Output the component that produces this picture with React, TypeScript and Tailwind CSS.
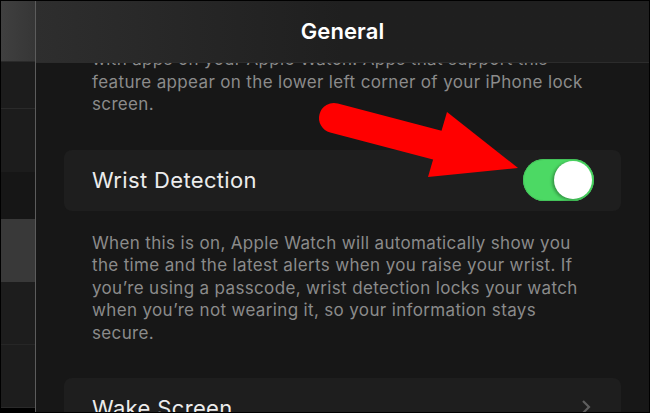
import React from "react";

const sideRows = [
  { h: "h-[47px]", bg: "bg-[#1c1c1c]", border: "border-b border-[#2a2a2a]" },
  { h: "h-[63px]", bg: "bg-[#1c1c1c]", border: "" },
  { h: "h-[47px]", bg: "bg-[#161616]", border: "" },
  { h: "h-[63px]", bg: "bg-[#393939]", border: "" },
  { h: "h-[63px]", bg: "bg-[#1d1d1d]", border: "border-b border-[#262626]" },
  { h: "h-[63px]", bg: "bg-[#1d1d1d]", border: "border-b border-[#2a2a2a]" },
];

const Toggle = () => (
  <div className="w-[71px] h-[42px] rounded-full bg-[#4cd964] flex items-center justify-end pr-[2px] shadow-[inset_0_0_0_1px_#44c45a]">
    <div className="w-[38px] h-[38px] rounded-full bg-white shadow-[-2px_1px_3px_rgba(0,0,0,0.3)]" />
  </div>
);

export default function App() {
  return (
    <div className="relative w-[650px] h-[413px] overflow-hidden bg-black p-px font-['Inter','Noto_Sans',sans-serif]">
      <div className="flex h-full">
        {/* sidebar */}
        <div className="w-[34px] flex flex-col">
          <div className="h-[61px] bg-gradient-to-r from-[#404040] to-[#363636] border-b border-[#2a2a2a]" />
          {sideRows.map((r, i) => (
            <div key={i} className={`${r.h} ${r.bg} ${r.border} shrink-0`} />
          ))}
        </div>
        <div className="w-px bg-[#5c5c5c]" />

        {/* main */}
        <div className="flex-1 flex flex-col bg-[#171717] min-w-0">
          <div className="h-[62px] shrink-0 bg-gradient-to-r from-[#2e2e2e] via-[#1f1f1f] to-[#1f1f1f] border-b border-[#2c2c2c] flex items-center justify-center relative z-10">
            <span className="text-white text-[22px] font-semibold tracking-[0.1px]">General</span>
          </div>
          <div className="flex-1 overflow-hidden px-[28px]">
            <p className="mt-[-15px] px-[28px] text-[17px] leading-[22.5px] text-[#8b8b8b] tracking-[0.35px]">
              with apps on your Apple Watch. Apps that support this
              <br />
              feature appear on the lower left corner of your iPhone lock
              <br />
              screen.
            </p>

            <div className="mt-[34px] h-[61px] rounded-[8px] bg-[#1e1e1e] flex items-center justify-between pl-[28px] pr-[27px]">
              <span className="text-[22px] text-[#ececec] tracking-[0.35px]">Wrist Detection</span>
              <Toggle />
            </div>

            <p className="mt-[21px] px-[28px] text-[17px] leading-[22.5px] text-[#8b8b8b] tracking-[0.35px]">
              When this is on, Apple Watch will automatically show you
              <br />
              the time and the latest alerts when you raise your wrist. If
              <br />
              you’re using a passcode, wrist detection locks your watch
              <br />
              when you’re not wearing it, so your information stays
              <br />
              secure.
            </p>

            <div className="mt-[34px] h-[61px] rounded-[8px] bg-[#1e1e1e] flex items-center justify-between pl-[28px] pr-[30px]">
              <span className="text-[22px] text-[#ececec] tracking-[0.35px]">Wake Screen</span>
              <svg width="10" height="16" viewBox="0 0 10 16" className="mt-[-4px]">
                <path d="M2 2 L8 8 L2 14" fill="none" stroke="#5e5e5e" strokeWidth="2.2" />
              </svg>
            </div>
          </div>
        </div>
      </div>

      {/* red arrow annotation */}
      <svg className="absolute left-0 top-0 pointer-events-none" width="650" height="413" viewBox="0 0 650 413">
        <line x1="334" y1="118" x2="452" y2="149" stroke="#ff0000" strokeWidth="30" strokeLinecap="round" />
        <polygon points="447,112 428,177 518,168" fill="#ff0000" />
      </svg>
    </div>
  );
}
